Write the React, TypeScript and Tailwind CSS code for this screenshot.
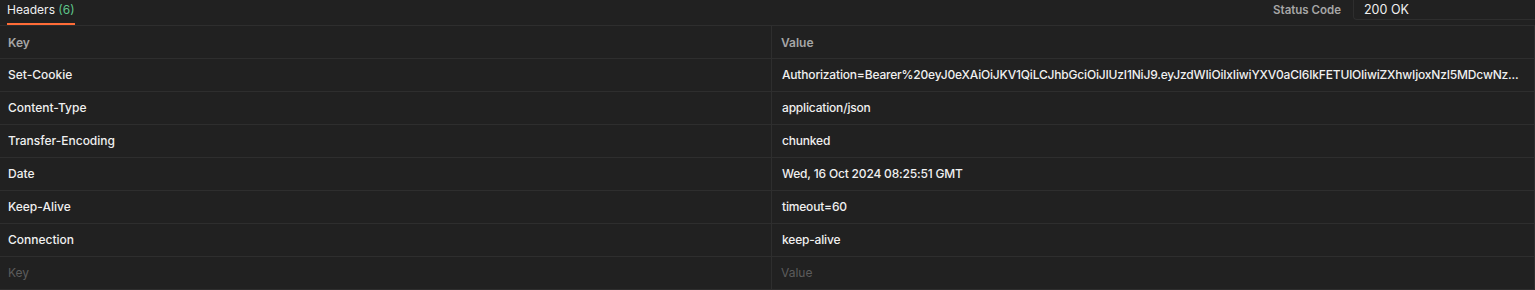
import React from "react";

const rows = [
  { key: "Set-Cookie", value: "Authorization=Bearer%20eyJ0eXAiOiJKV1QiLCJhbGciOiJIUzI1NiJ9.eyJzdWIiOiIxIiwiYXV0aCI6IkFETUlOIiwiZXhwIjoxNzI5MDcwNz..." },
  { key: "Content-Type", value: "application/json" },
  { key: "Transfer-Encoding", value: "chunked" },
  { key: "Date", value: "Wed, 16 Oct 2024 08:25:51 GMT" },
  { key: "Keep-Alive", value: "timeout=60" },
  { key: "Connection", value: "keep-alive" },
];

export default function App() {
  return (
    <div className="w-[1535px] h-[290px] bg-[#212121] text-[12px] text-[#f0f0f0] overflow-hidden" style={{ fontFamily: "Inter, 'Noto Sans', sans-serif" }}>
      {/* tab bar */}
      <div className="flex h-[26px] border-b border-[#2e2e2e]">
        <div className="flex pl-[7px]">
          <div className="h-[25px] flex items-start pt-[1px] border-b-2 border-[#ff6c37] text-[12px]">
            Headers&nbsp;<span className="text-[#5ec58a]">(6)</span>
          </div>
        </div>
        <div className="ml-auto flex items-start">
          <span className="text-[#a6a6a6] font-semibold text-[11.5px] pt-[2px] mr-[12px]">Status Code</span>
          <div className="w-[182px] h-[20px] rounded-bl-[4px] border-l border-b border-[#2e2e2e] pl-[10px] pt-[1px] text-[12.5px]">200 OK</div>
        </div>
      </div>

      {/* table */}
      <div className="border-r border-[#2e2e2e]">
        <div className="grid grid-cols-[772px_1fr] h-[33px] border-b border-[#2e2e2e] text-[#a6a6a6] font-semibold">
          <div className="flex items-center pl-[8px] pt-[1px] border-r border-[#2e2e2e]">Key</div>
          <div className="flex items-center pl-[9px] pt-[1px]">Value</div>
        </div>
        {rows.map((r) => (
          <div key={r.key} className="grid grid-cols-[772px_1fr] h-[33px] border-b border-[#2e2e2e] font-medium">
            <div className="flex items-center pl-[8px] border-r border-[#2e2e2e]">{r.key}</div>
            <div className="flex items-center pl-[10px] min-w-0 whitespace-nowrap tracking-[-0.18px]">{r.value}</div>
          </div>
        ))}
        <div className="grid grid-cols-[772px_1fr] h-[33px] border-b border-[#2e2e2e] text-[#5c5c5c]">
          <div className="flex items-center pl-[8px] border-r border-[#2e2e2e]">Key</div>
          <div className="flex items-center pl-[9px]">Value</div>
        </div>
      </div>
    </div>
  );
}
